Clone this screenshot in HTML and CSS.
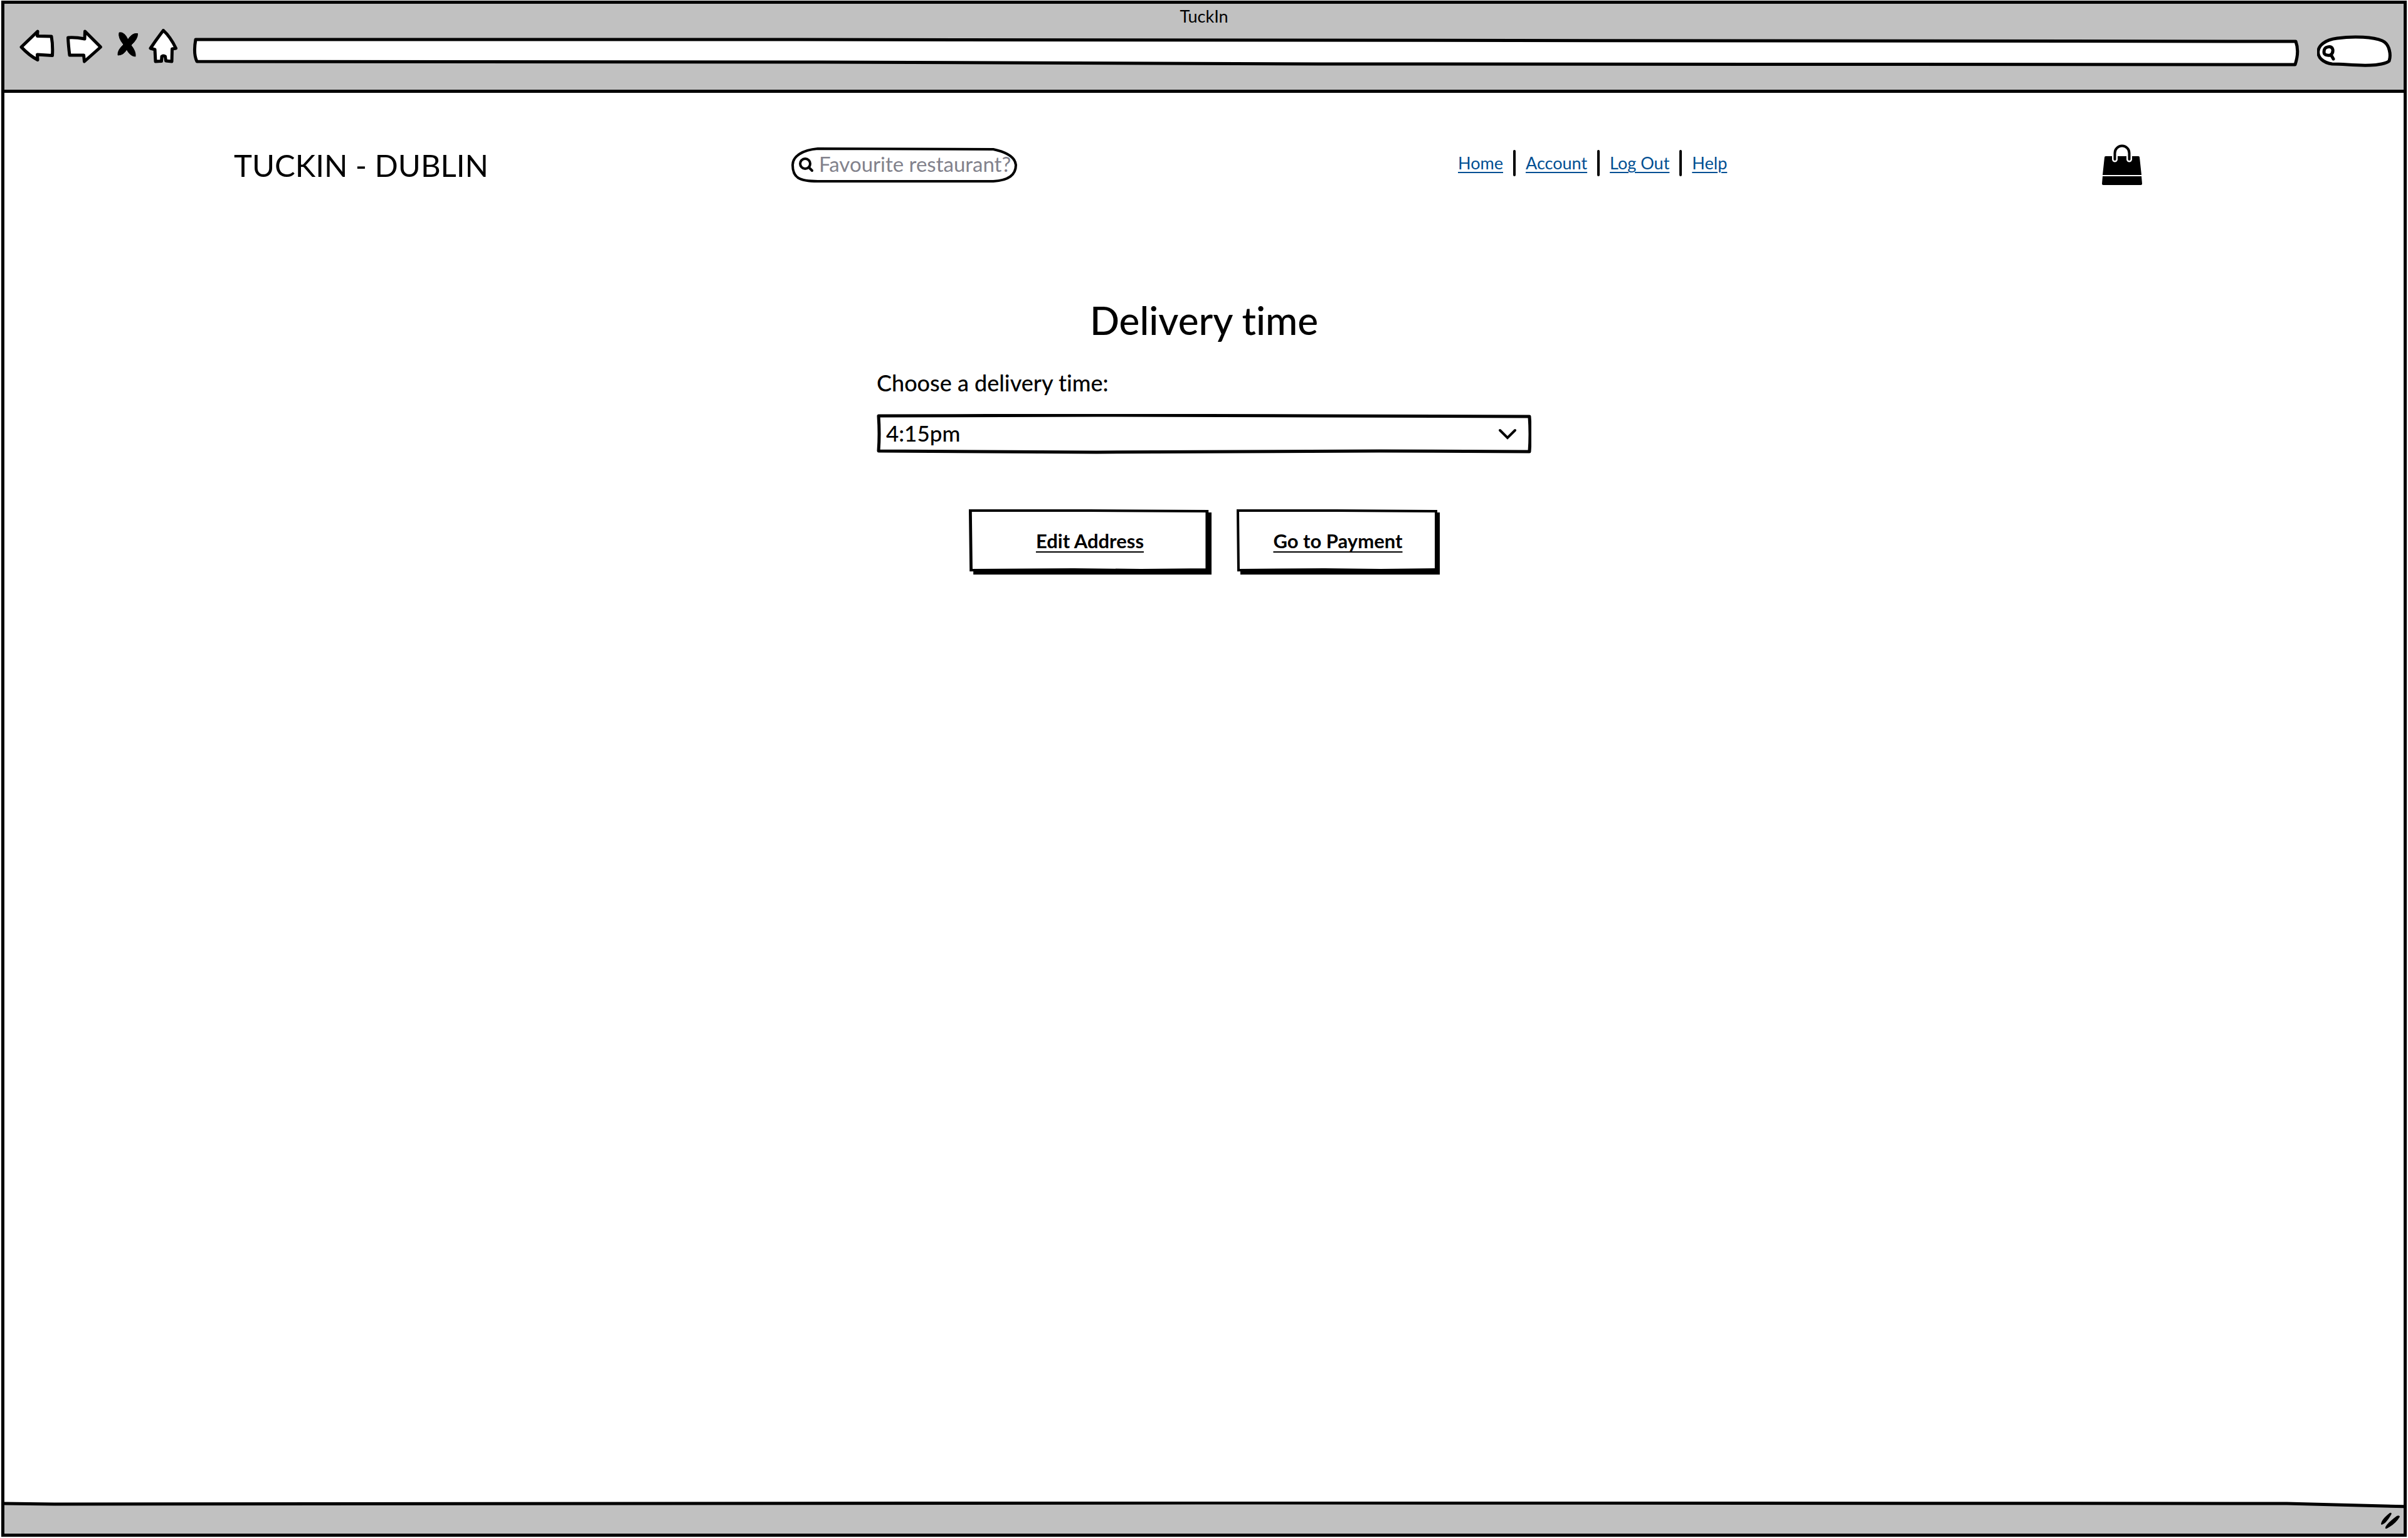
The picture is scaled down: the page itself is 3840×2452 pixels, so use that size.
FILE: index.html
```html
<!DOCTYPE html>
<html lang="en">
<head>
<meta charset="utf-8">
<meta name="viewport" content="width=device-width, initial-scale=1">
<title>TuckIn</title>
<link rel="stylesheet" href="styles.css">
</head>
<body>
<div class="window">
  <div class="chrome">
    <div class="window-title">TuckIn</div>
    <div class="toolbar">
      <div class="tools">
        <button class="tool" type="button" aria-label="Back">
          <svg width="58" height="56" viewBox="31 46 58 56"><path d="M60 50 L34 75 Q46 88 60 95.500 L59.500 87 L83.500 88.500 Q84.500 72 82 58 L59.500 57.500 Z"/></svg>
        </button>
        <button class="tool" type="button" aria-label="Forward">
          <svg width="68" height="56" viewBox="104 46 68 56"><path d="M135.500 50 L160.500 75 L134.500 98 L133.500 88 L111 88 Q109 72 108.500 60 Q120 59 135 62 Z"/></svg>
        </button>
        <button class="tool" type="button" aria-label="Stop">
          <svg width="34" height="56" viewBox="187 46 34 56"><path class="solid" d="M190 52 Q198 50 204 63 Q211 52 219.500 53.500 Q220 62 209 72 Q217 82 216 90 Q208 90 202 79 Q197 88 188 88 Q187 80 197 71 Q188 60 190 52 Z"/></svg>
        </button>
        <button class="tool" type="button" aria-label="Home">
          <svg width="48" height="56" viewBox="236 46 48 56"><path d="M260.500 48.500 Q250 62 240 77 L247 79 L248 98 L257.500 97.500 L258 90 Q261 88 263.500 90 L264.500 97 L274 98 L274.500 78 L280.500 77 Q272 59 260.500 48.500 Z"/></svg>
        </button>
      </div>
      <input class="address" type="text" aria-label="Address">
      <div class="quick-search">
        <svg class="quick-icon" width="22" height="26" viewBox="0 0 22 26"><path d="M6 4 Q15 0 17 7 Q18 13 13 16 Q3 17 3 11 Q3 6 6 4 M14 15 L18 22"/></svg>
        <input class="quick-input" type="text" aria-label="Web search">
      </div>
    </div>
  </div>

  <div class="page">
    <header class="header">
      <div class="brand">TUCKIN - DUBLIN</div>
      <form class="search">
        <svg class="search-icon" width="24" height="24" viewBox="0 0 24 24"><circle cx="10" cy="10" r="8"/><path d="M16 16 L21 21"/></svg>
        <input class="search-input" type="text" placeholder="Favourite restaurant?" aria-label="Favourite restaurant?">
      </form>
      <nav class="nav">
        <a href="#home">Home</a>
        <a href="#account">Account</a>
        <a href="#logout">Log Out</a>
        <a href="#help">Help</a>
      </nav>
      <a class="bag" href="#bag" aria-label="Shopping bag">
        <svg width="64" height="66" viewBox="0 0 64 66"><path d="M6 19 H58 Q60 19 60 21 L63 49 H1 L4 21 Q4 19 6 19 Z"/><path d="M1 51 H63 L64 63 Q64 65 62 65 H2 Q0 65 0 63 Z"/><path class="gap" d="M20.500 24 V14 A11.500 11.500 0 0 1 43.500 14 V24"/><path class="handle" d="M20.500 24 V14 A11.500 11.500 0 0 1 43.500 14 V24"/></svg>
      </a>
    </header>

    <main class="delivery">
      <h1 class="heading">Delivery time</h1>
      <label class="label" for="time">Choose a delivery time:</label>
      <select class="select" id="time">
        <option>4:15pm</option>
      </select>
      <div class="actions">
        <button class="button button-wide" type="button">Edit Address</button>
        <button class="button" type="button">Go to Payment</button>
      </div>
    </main>
  </div>

  <div class="status">
    <svg width="34" height="28" viewBox="0 0 34 28"><path d="M2 20 Q2 13 16 2 Q20 1 18 5 Q10 19 3 21 Z"/><path d="M9 27 Q7 22 27 7 Q31 5 32 8 Q25 20 11 27 Z"/></svg>
  </div>
</div>
</body>
</html>
```
FILE: styles.css
```css
* {
  box-sizing: border-box;
}

body {
  margin: 0;
  background: #fff;
  color: #000;
  font-family: Lato, "Liberation Sans", sans-serif;
  font-variant-ligatures: none;
}

button,
input,
select {
  margin: 0;
  padding: 0;
  border: 0;
  background: none;
  color: inherit;
  font: inherit;
  outline: 0;
}

svg {
  display: block;
}

.window {
  display: flex;
  flex-direction: column;
  min-height: 100vh;
  padding: 1px 2px 2px;
}

.window > * {
  border: 5px solid #000;
}

/* Browser chrome */
.chrome {
  height: 147px;
  background: #c1c1c1;
}

.window-title {
  height: 40px;
  font-size: 27px;
  line-height: 40px;
  text-align: center;
}

.toolbar {
  display: flex;
  align-items: flex-start;
  padding: 0 18px 0 24px;
}

.tools {
  display: flex;
  gap: 15px;
  margin-right: 23px;
}

.tool {
  fill: #fff;
  stroke: #000;
  stroke-width: 5px;
  stroke-linejoin: round;
}

.tool .solid {
  fill: #000;
  stroke-width: 1px;
}

.address {
  flex: 1;
  height: 46px;
  margin: 14px 28px 0 0;
  padding: 0 16px;
  font-size: 27px;
  background: url("data:image/svg+xml,%3Csvg xmlns='http://www.w3.org/2000/svg' viewBox='0 0 3360 46' preserveAspectRatio='none'%3E%3Cpath d='M5 3 L900 3 L2500 5 L3354 6 Q3360 22 3353 43 L1800 42 L1000 39 L7 38 Q1 26 5 3 Z' fill='white' stroke='black' stroke-width='5' stroke-linejoin='round'/%3E%3C/svg%3E") 0 0 / 100% 100% no-repeat;
}

.quick-search {
  display: flex;
  width: 120px;
  height: 52px;
  margin-top: 10px;
  padding: 16px 8px 8px;
  background: url("data:image/svg+xml,%3Csvg xmlns='http://www.w3.org/2000/svg' viewBox='0 0 120 52' preserveAspectRatio='none'%3E%3Cpath d='M24 46 C-6 42 -8 10 32 5 C60 1 90 3 104 9 C116 14 118 32 115 41 C112 45 95 48 85 48 C62 49 44 46 24 46 Z' fill='white' stroke='black' stroke-width='5'/%3E%3C/svg%3E") 0 0 / 100% 100% no-repeat;
}

.quick-icon {
  flex: none;
  fill: none;
  stroke: #000;
  stroke-width: 5px;
  stroke-linecap: round;
}

.quick-input {
  flex: 1;
  min-width: 0;
  font-size: 20px;
}

/* Page */
.window > .page {
  flex: 1;
  border-width: 0 5px;
}

.header {
  display: grid;
  grid-template-columns: 889fr 1063fr 1027fr 64px;
  align-items: center;
  padding: 82px 417px 0 366px;
}

.brand {
  font-size: 49px;
  line-height: 64px;
}

.search {
  display: flex;
  align-items: center;
  width: 360px;
  height: 56px;
  padding: 0 4px 4px 12px;
  background: url("data:image/svg+xml,%3Csvg xmlns='http://www.w3.org/2000/svg' viewBox='0 0 360 56' preserveAspectRatio='none'%3E%3Cpath d='M42 2 L322 3 C345 8 357 17 358 28 C358 48 340 53 322 54 L42 54 C12 54 2 48 2 28 C2 14 18 4 42 2 Z' fill='white' stroke='black' stroke-width='4'/%3E%3C/svg%3E") 0 0 / 100% 100% no-repeat;
}

.search-icon {
  flex: none;
  margin-top: 4px;
  fill: none;
  stroke: #000;
  stroke-width: 4px;
  stroke-linecap: round;
}

.search-input {
  flex: 1;
  min-width: 0;
  margin-left: 8px;
  font-size: 33px;
  line-height: 40px;
}

.search-input::placeholder {
  color: #82828c;
  opacity: 1;
}

.nav {
  display: flex;
  align-items: center;
  padding-bottom: 6px;
}

.nav a {
  color: #004f93;
  font-size: 27px;
  line-height: 40px;
  text-decoration-thickness: 2px;
  text-underline-offset: 4px;
}

.nav a + a {
  display: flex;
  align-items: center;
}

.nav a + a::before {
  width: 4px;
  height: 42px;
  margin: 0 16px;
  border-radius: 2px;
  background: #000;
  content: "";
}

.bag .gap {
  fill: none;
  stroke: #fff;
  stroke-width: 9px;
  stroke-linecap: round;
}

.bag .handle {
  fill: none;
  stroke: #000;
  stroke-width: 4px;
  stroke-linecap: round;
}

/* Delivery form */
.delivery {
  display: flex;
  flex-direction: column;
  max-width: 1044px;
  margin: 174px auto 0;
}

.heading {
  margin: 0;
  font-size: 62px;
  font-weight: 500;
  line-height: 80px;
  text-align: center;
}

.label {
  margin-top: 36px;
  font-size: 36px;
  font-weight: 500;
  line-height: 48px;
}

.select {
  height: 64px;
  margin-top: 26px;
  padding: 0 64px 4px 15px;
  font-size: 35px;
  font-weight: 500;
  appearance: none;
  background:
    url("data:image/svg+xml,%3Csvg xmlns='http://www.w3.org/2000/svg' width='28' height='18' viewBox='0 0 28 18'%3E%3Cpath d='M2 3 L14 15 L26 3' fill='none' stroke='black' stroke-width='4' stroke-linecap='round'/%3E%3C/svg%3E") right 24px top 23px no-repeat,
    url("data:image/svg+xml,%3Csvg xmlns='http://www.w3.org/2000/svg' viewBox='0 0 1042 64' preserveAspectRatio='none'%3E%3Cpath d='M3 3 L350 2 L700 3 L1039 4 Q1041 32 1039 60 L800 59 L350 61 L3 59 Q5 32 3 3 Z' fill='white' stroke='black' stroke-width='5' stroke-linejoin='round'/%3E%3C/svg%3E") 0 0 / 100% 100% no-repeat;
}

.actions {
  display: flex;
  justify-content: center;
  gap: 40px;
  margin-top: 88px;
}

.button {
  width: 324px;
  height: 104px;
  padding-bottom: 4px;
  font-size: 31px;
  font-weight: 700;
  text-decoration: underline;
  text-decoration-thickness: 2px;
  text-underline-offset: 5px;
  background: url("data:image/svg+xml,%3Csvg xmlns='http://www.w3.org/2000/svg' viewBox='0 0 324 104' preserveAspectRatio='none'%3E%3Cpath d='M6 95 H318 V5 H324 V104 H6 Z'/%3E%3Cpath d='M2 2 L160 2 L318 3 L318 96 L230 97 L140 96 L3 97 Z' fill='white' stroke='black' stroke-width='4'/%3E%3C/svg%3E") 0 0 / 100% 100% no-repeat;
}

.button-wide {
  width: 387px;
}

/* Status bar */
.window > .status {
  display: flex;
  justify-content: flex-end;
  align-items: center;
  height: 56px;
  padding: 8px 4px 0 0;
  border-top: 0;
  background: url("data:image/svg+xml,%3Csvg xmlns='http://www.w3.org/2000/svg' viewBox='0 0 3826 12' preserveAspectRatio='none'%3E%3Cpath d='M0 0 H3826 V8 L3640 3 L1900 2 L80 4 L0 3 Z' fill='white'/%3E%3Cpath d='M-9 3 L80 4 L1900 2 L3640 3 L3835 8' fill='none' stroke='black' stroke-width='5'/%3E%3C/svg%3E") 0 0 / 100% 12px no-repeat #c1c1c1;
}
```
